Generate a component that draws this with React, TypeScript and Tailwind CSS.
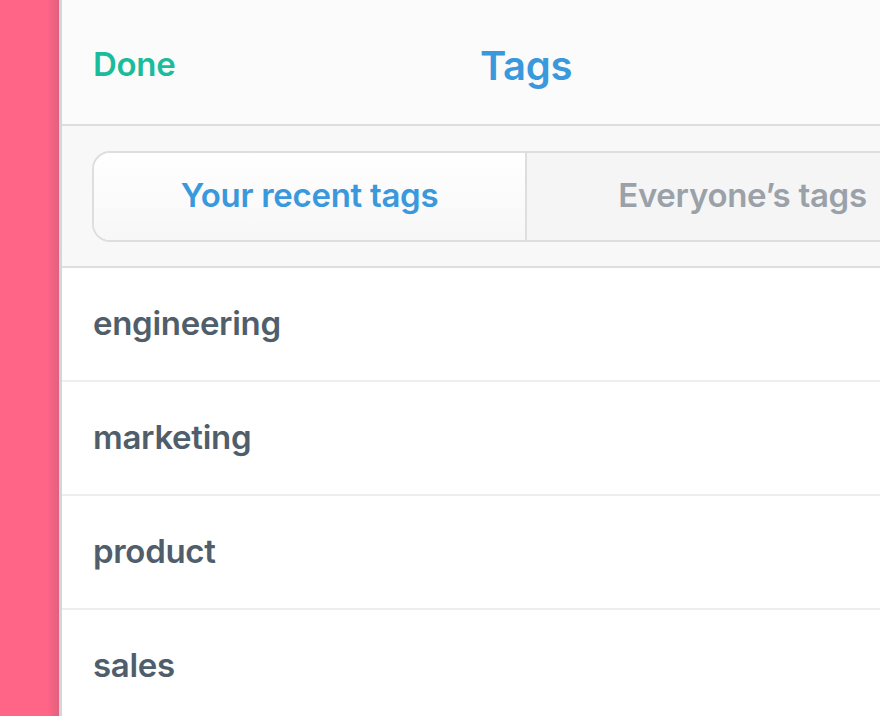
import React from "react";

const tags = ["engineering", "marketing", "product", "sales"];

export default function App() {
  return (
    <div
      className="flex h-[716px] w-[880px] overflow-hidden bg-white"
      style={{ fontFamily: "Inter, Lato, sans-serif", fontVariantLigatures: "none" }}
    >
      <div className="h-full w-[59px] shrink-0 bg-gradient-to-r from-[#ff6586] from-80% to-[#e2607e]" />
      <div className="h-full w-[3px] shrink-0 bg-[#d4d6d9]" />
      <div className="flex h-full w-[928px] shrink-0 flex-col">
        <div className="relative flex h-[126px] shrink-0 items-center border-b-2 border-[#dcdee0] bg-[#fbfbfb] px-[31px] pt-[6px]">
          <span className="text-[33px] font-semibold tracking-[-0.3px] text-[#1bbc9b]">Done</span>
          <span className="absolute left-0 right-0 pt-[2px] text-center text-[40px] font-semibold tracking-[-0.3px] text-[#3a99dc]">
            Tags
          </span>
        </div>
        <div className="flex h-[142px] shrink-0 items-center border-b-2 border-[#dcdee0] bg-[#f8f8f8] px-[30px]">
          <div className="flex h-[91px] w-full overflow-hidden rounded-[18px] border-2 border-[#dcdee0]">
            <div className="flex flex-1 items-center justify-center bg-gradient-to-b from-white to-[#f7f7f7] text-[33px] font-semibold tracking-[-0.3px] text-[#3a99dc]">
              Your recent tags
            </div>
            <div className="w-[2px] bg-[#dcdee0]" />
            <div className="flex flex-1 items-center justify-center bg-[#f5f5f5] text-[33px] font-semibold tracking-[-0.3px] text-[#9aa1a9]">
              Everyone’s tags
            </div>
          </div>
        </div>
        {tags.map((t) => (
          <div
            key={t}
            className="flex h-[114px] shrink-0 items-center border-b-2 border-[#eceff0] px-[31px] text-[33px] font-semibold tracking-[-0.3px] text-[#505e6c]"
          >
            {t}
          </div>
        ))}
      </div>
    </div>
  );
}
